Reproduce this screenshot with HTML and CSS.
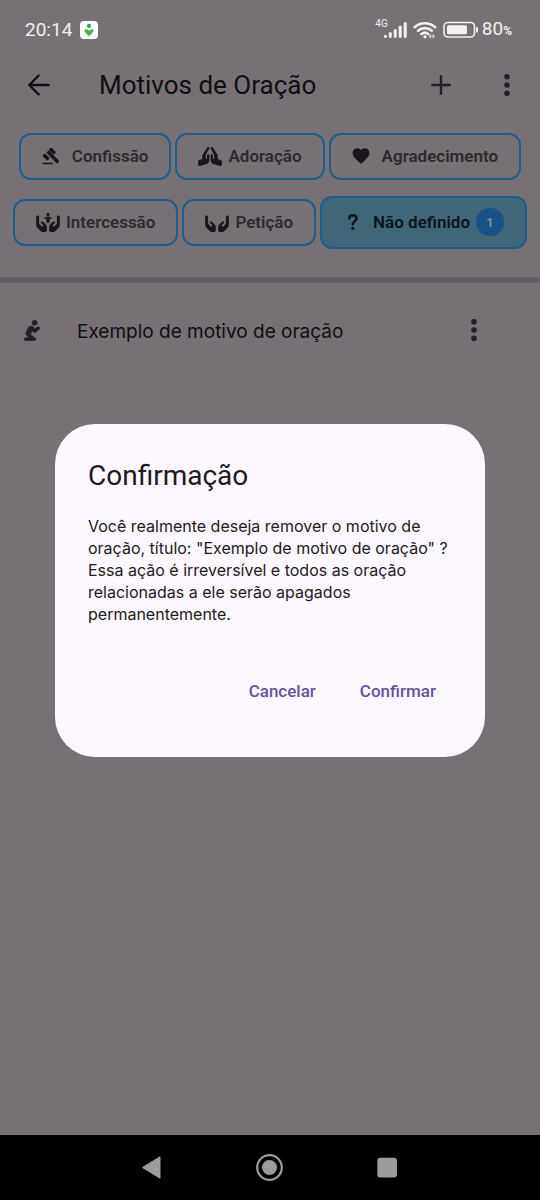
FILE: index.html
```html
<!DOCTYPE html>
<html lang="pt-BR">
<head>
<meta charset="utf-8">
<meta name="viewport" content="width=device-width, initial-scale=1">
<title>Motivos de Oração</title>
<link rel="stylesheet" href="styles.css">
</head>
<body>
<div class="screen">
  <div class="status-bar">
    <span class="clock">20:14</span>
    <svg class="app-badge" viewBox="0 0 18 18" aria-hidden="true">
      <rect width="18" height="18" rx="4" fill="#fff"/>
      <circle cx="9" cy="4.9" r="2.1" fill="#14b866"/>
      <path d="M9 15.2 6.3 12.4C4 10.9 4 8.4 6 8.3c1.3 0 2.3.6 3 1.5.7-.9 1.7-1.5 3-1.500 2 .1 2 2.6-.3 4.1z" fill="#4fb052"/>
    </svg>
    <div class="status-icons">
      <span class="network">4G</span>
      <svg class="signal" viewBox="0 0 26 18" aria-hidden="true">
        <g stroke="#f1eff1" stroke-width="3" stroke-linecap="round">
          <path d="M3.5 15.3v.2M8.3 12.500v3M13.2 9.500v6M18.2 6v9.500M23.2 2.500v13"/>
        </g>
      </svg>
      <svg class="wifi" viewBox="0 0 24 18" aria-hidden="true">
        <g fill="none" stroke="#f1eff1" stroke-width="2.6" stroke-linecap="round">
          <path d="M1.6 6.200c5.600-5.300 14.900-5.300 20.500 0M5 9.700c3.800-3.500 10-3.500 13.700 0M8.500 13c2-1.700 4.800-1.700 6.700 0"/>
        </g>
        <circle cx="12" cy="15.8" r="1.7" fill="#f1eff1"/>
        <path d="M18.2 12.500v5l-2.500-2zM19.500 17.500v-5l2.500 3z" fill="#dddadd"/>
      </svg>
      <svg class="battery" viewBox="0 0 36 18" aria-hidden="true">
        <rect x="1" y="1.5" width="30.5" height="14.5" rx="4" fill="none" stroke="#f1eff1" stroke-width="1.6"/>
        <rect x="4" y="4.300" width="20" height="9" rx="1.5" fill="#f1eff1"/>
        <path d="M34 7v3.600" stroke="#f1eff1" stroke-width="2" stroke-linecap="round"/>
      </svg>
      <span class="charge">80<small>%</small></span>
    </div>
  </div>

  <header class="app-bar">
    <button class="icon-button" type="button" aria-label="Voltar">
      <svg viewBox="0 0 24 24" width="24" height="24"><path d="M21.500 12H2.500M11.700 2.500 2.200 12l9.500 9.500" fill="none" stroke="#100e12" stroke-width="2.4" stroke-linecap="round" stroke-linejoin="round"/></svg>
    </button>
    <h1 class="app-title">Motivos de Oração</h1>
    <button class="icon-button" type="button" aria-label="Adicionar">
      <svg viewBox="0 0 24 24" width="24" height="24"><path d="M12 2.300v19.400M2.300 12h19.400" stroke="#231f26" stroke-width="2.4"/></svg>
    </button>
    <button class="icon-button" type="button" aria-label="Mais opções">
      <svg viewBox="0 0 24 24" width="24" height="24" fill="#231f26"><circle cx="12" cy="3.7" r="2.8"/><circle cx="12" cy="12" r="2.8"/><circle cx="12" cy="20.3" r="2.8"/></svg>
    </button>
  </header>

  <nav class="chips" aria-label="Categorias">
    <button class="chip" type="button">
      <span class="chip-icon"><svg viewBox="0 0 24 24" width="18" height="18" fill="#17161a" stroke="#17161a" stroke-linejoin="round"><path d="M1.500 22h12" stroke-width="2.2" stroke-linecap="round"/><path d="M7 7.500l2-2 13 13.500-2 2zM12.300 1.800l5.200 5.200-2 2-5.200-5.200zM3.800 9.800 9 15l-2 2-5.200-5.200z" stroke-width="1.8"/></svg></span>
      Confissão
    </button>
    <button class="chip" type="button">
      <span class="chip-icon"><svg viewBox="0 0 640 512" width="24" height="19" fill="#17161a"><path d="M351.200 4.800c3.200-2 6.600-3.300 10-4.100c4.700-1 9.600-.9 14.100 .1c7.700 1.800 14.800 6.500 19.400 13.600L514.600 194.200c8.800 13.100 13.400 28.600 13.400 44.400l0 73.500c0 6.900 4.400 13 10.900 15.200l79.200 26.400C631.200 358 640 370.200 640 384l0 96c0 9.900-4.600 19.300-12.500 25.400s-18.100 8.100-27.700 5.500L431 465.900c-56-14.900-95-65.700-95-123.700L336 224c0-17.700 14.300-32 32-32s32 14.300 32 32l0 80c0 8.800 7.200 16 16 16s16-7.200 16-16l0-84.900c0-7-1.800-13.800-5.300-19.800L340.300 48.100c-1.700-3-2.900-6.100-3.600-9.300c-1-4.700-1-9.600 .1-14.100c1.900-8 6.800-15.200 14.300-19.900zm-62.400 0c7.500 4.600 12.400 11.900 14.300 19.900c1.100 4.600 1.200 9.400 .1 14.100c-.7 3.200-1.900 6.300-3.600 9.300L213.300 199.300c-3.500 6-5.300 12.900-5.300 19.800l0 84.900c0 8.800 7.200 16 16 16s16-7.200 16-16l0-80c0-17.700 14.300-32 32-32s32 14.300 32 32l0 118.200c0 58-39 108.700-95 123.700l-168.700 45c-9.600 2.600-19.900 .5-27.700-5.500S0 490 0 480l0-96c0-13.800 8.800-26 21.900-30.400l79.200-26.400c6.500-2.200 10.900-8.300 10.900-15.200l0-73.500c0-15.800 4.700-31.200 13.400-44.400L245.200 14.500c4.600-7.100 11.700-11.800 19.400-13.600c4.600-1.100 9.400-1.200 14.100-.1c3.500 .8 6.900 2.100 10 4.100z"/></svg></span>
      Adoração
    </button>
    <button class="chip" type="button">
      <span class="chip-icon"><svg viewBox="0 0 24 24" width="18" height="18" fill="#17161a"><path d="M12 22.500 10.400 21C4.600 15.700.8 12.200.8 7.900.8 4.400 3.600 1.700 7 1.700c2 0 3.800.9 5 2.300 1.200-1.400 3-2.300 5-2.300 3.400 0 6.200 2.700 6.200 6.200 0 4.300-3.800 7.800-9.600 13.100z"/></svg></span>
      Agradecimento
    </button>
    <button class="chip" type="button">
      <span class="chip-icon"><svg viewBox="0 0 640 512" width="24" height="19" fill="#17161a"><path d="M80 104c0-22.100-17.900-40-40-40S0 81.900 0 104l0 221.500c0 25.500 10.100 49.900 28.100 67.900L128 493.300c12 12 28.300 18.700 45.300 18.700l66.700 0c26.500 0 48-21.500 48-48l0-78.900c0-29.700-11.800-58.200-32.800-79.200l-72.500-72.500c-12.500-12.500-32.800-12.500-45.300 0s-12.500 32.800 0 45.300l47.200 47.200c11 11 9.200 29.200-3.700 37.800c-9.700 6.500-22.700 5.200-31-3.100L98.700 309.500c-12-12-18.700-28.300-18.700-45.300zM560 104l0 160.200c0 17-6.700 33.300-18.700 45.300l-51.100 51.100c-8.300 8.300-21.300 9.600-31 3.100c-12.900-8.600-14.700-26.900-3.700-37.800l47.200-47.200c12.500-12.500 12.500-32.800 0-45.300s-32.800-12.500-45.300 0l-72.500 72.500c-21 21-32.800 49.500-32.800 79.200l0 78.900c0 26.500 21.500 48 48 48l66.700 0c17 0 33.300-6.700 45.300-18.700l99.900-99.900c18-18 28.100-42.400 28.100-67.900L640 104c0-22.100-17.900-40-40-40s-40 17.900-40 40z"/><circle cx="320" cy="40" r="42"/><path d="M236 138l52-20h64l52 20M320 130v72M298 140v108M342 140v108" fill="none" stroke="#17161a" stroke-width="42" stroke-linecap="round" stroke-linejoin="round"/></svg></span>
      Intercessão
    </button>
    <button class="chip" type="button">
      <span class="chip-icon"><svg viewBox="0 0 640 512" width="24" height="19" fill="#17161a"><path d="M80 104c0-22.100-17.900-40-40-40S0 81.900 0 104l0 221.500c0 25.500 10.100 49.900 28.100 67.900L128 493.300c12 12 28.300 18.700 45.300 18.700l66.700 0c26.500 0 48-21.500 48-48l0-78.900c0-29.700-11.800-58.200-32.800-79.200l-72.500-72.500c-12.500-12.500-32.800-12.500-45.300 0s-12.500 32.800 0 45.300l47.200 47.200c11 11 9.200 29.200-3.700 37.800c-9.700 6.500-22.700 5.200-31-3.100L98.700 309.500c-12-12-18.700-28.300-18.700-45.300zM560 104l0 160.200c0 17-6.700 33.300-18.700 45.300l-51.100 51.100c-8.300 8.300-21.300 9.600-31 3.100c-12.900-8.600-14.700-26.900-3.700-37.800l47.200-47.200c12.500-12.500 12.500-32.800 0-45.300s-32.800-12.500-45.300 0l-72.500 72.500c-21 21-32.800 49.500-32.800 79.200l0 78.900c0 26.500 21.500 48 48 48l66.700 0c17 0 33.300-6.700 45.300-18.700l99.900-99.900c18-18 28.100-42.400 28.100-67.900L640 104c0-22.100-17.900-40-40-40s-40 17.900-40 40z"/></svg></span>
      Petição
    </button>
    <button class="chip chip-selected" type="button" aria-pressed="true">
      <span class="chip-icon"><svg viewBox="0 0 18 18" width="18" height="18"><path d="M6.300 5.500C6.300 3.300 7.800 2.200 9.800 2.200s3.700 1.200 3.700 3.200C13.500 8 9.800 8.300 9.800 11.300" fill="none" stroke="#0d1419" stroke-width="2.5" stroke-linecap="round"/><circle cx="9.8" cy="15.3" r="1.6" fill="#0d1419"/></svg></span>
      Não definido
      <span class="count">1</span>
    </button>
  </nav>

  <main class="list">
    <article class="item">
      <svg class="item-icon" viewBox="0 0 448 512" aria-hidden="true"><path d="M354 64a64 64 0 1 0-128 0a64 64 0 1 0 128 0zM232.700 264l22.900 31.500c6.500 8.900 16.300 14.700 27.200 16.100s21.900-1.700 30.400-8.700l88-72c17.100-14 19.600-39.200 5.600-56.300s-39.200-19.600-56.300-5.600l-55.200 45.200-26.200-36C253.600 156.700 228.600 144 202 144c-30.900 0-59.200 17.100-73.600 44.400L79.800 280.900c-20.200 38.500-9.400 85.900 25.600 111.800L158.600 432 72 432c-22.100 0-40 17.900-40 40s17.900 40 40 40l208 0c17.300 0 32.600-11.100 38-27.500s-.3-34.400-14.200-44.600L187.700 354z" fill="#231f26" stroke="#231f26" stroke-width="10"/></svg>
      <span class="item-title">Exemplo de motivo de oração</span>
      <button class="icon-button" type="button" aria-label="Opções do motivo">
        <svg viewBox="0 0 24 24" width="24" height="24" fill="#231f26"><circle cx="12" cy="3.7" r="2.8"/><circle cx="12" cy="12" r="2.8"/><circle cx="12" cy="20.3" r="2.8"/></svg>
      </button>
    </article>
  </main>

  <div class="overlay">
    <section class="dialog" role="alertdialog" aria-modal="true" aria-labelledby="dialog-title" aria-describedby="dialog-text">
      <h2 class="dialog-title" id="dialog-title">Confirmação</h2>
      <p class="dialog-text" id="dialog-text">Você realmente deseja remover o motivo de oração, título: "Exemplo de motivo de oração" ? Essa ação é irreversível e todos as oração relacionadas a ele serão apagados permanentemente.</p>
      <div class="dialog-actions">
        <button class="text-button" type="button">Cancelar</button>
        <button class="text-button" type="button">Confirmar</button>
      </div>
    </section>
  </div>
</div>

<footer class="system-nav">
  <button class="nav-button" type="button" aria-label="Voltar"><svg viewBox="0 0 28 28" width="28" height="28"><path d="M4.500 13.500 22 2.800v21.400z" fill="#9c9c9c" stroke="#9c9c9c" stroke-linejoin="round"/></svg></button>
  <button class="nav-button" type="button" aria-label="Início"><svg viewBox="0 0 28 28" width="28" height="28"><circle cx="13.5" cy="13.5" r="12.3" fill="none" stroke="#9c9c9c" stroke-width="2.2"/><circle cx="13.5" cy="13.5" r="7.5" fill="#9c9c9c"/></svg></button>
  <button class="nav-button" type="button" aria-label="Recentes"><svg viewBox="0 0 28 28" width="28" height="28"><rect x="3.3" y="3.7" width="19.700" height="19.700" rx="3" fill="#9c9c9c"/></svg></button>
</footer>
</body>
</html>
```
FILE: styles.css
```css
* {
  box-sizing: border-box;
}

body {
  margin: 0;
  min-height: 100vh;
  display: flex;
  flex-direction: column;
  background: #777175;
  color: #100e12;
  font-family: Roboto, "Noto Sans", sans-serif;
}

button {
  padding: 0;
  border: 0;
  background: none;
  color: inherit;
  font: inherit;
}

svg {
  display: block;
  flex: none;
}

.screen {
  position: relative;
  flex: 1;
}

/* Status bar */
.status-bar {
  display: flex;
  align-items: center;
  gap: 8px;
  height: 60px;
  padding: 0 28px 0 25px;
  color: #f1eff1;
}

.clock,
.charge {
  font-size: 19px;
  line-height: 24px;
}

.app-badge {
  width: 18px;
  height: 18px;
}

.status-icons {
  display: flex;
  align-items: center;
  margin-left: auto;
}

.network {
  align-self: flex-start;
  font-size: 10px;
  line-height: 14px;
  margin-right: -6px;
}

.signal {
  width: 26px;
  height: 18px;
}

.wifi {
  width: 24px;
  height: 18px;
  margin: 0 6px 0 5px;
}

.battery {
  width: 36px;
  height: 18px;
  margin-right: 3px;
}

.charge small {
  font-size: 12px;
  font-weight: 700;
}

/* App bar */
.app-bar {
  display: flex;
  align-items: center;
  height: 50px;
  padding: 0 12px 0 18px;
}

.icon-button {
  display: grid;
  place-items: center;
  width: 42px;
  height: 42px;
}

.app-title {
  flex: 1;
  margin: 0;
  padding-left: 39px;
  font-size: 26px;
  font-weight: 400;
  line-height: 32px;
}

.app-bar .icon-button + .icon-button {
  margin-left: 24px;
}

/* Category chips */
.chips {
  display: flex;
  flex-wrap: wrap;
  align-items: center;
  justify-content: center;
  gap: 16px 4px;
  padding: 23px 12px 28px;
  border-bottom: 6px solid #655f65;
}

.chip {
  display: flex;
  align-items: center;
  height: 47px;
  padding: 0 21px 1px;
  border: 2px solid #1e5d8b;
  border-radius: 12px;
  color: #2d292f;
  font-size: 17px;
  font-weight: 600;
  white-space: nowrap;
}

.chip-icon {
  width: 30px;
}

.chip-selected {
  height: 53px;
  background: #3f6778;
  color: #0d1419;
}

.count {
  display: grid;
  place-items: center;
  width: 28px;
  height: 28px;
  margin-left: 6px;
  border-radius: 50%;
  background: #175289;
  color: #8a8d96;
  font-size: 13px;
}

/* List */
.item {
  display: flex;
  align-items: center;
  height: 94px;
  padding: 0 45px 0 23px;
}

.item-icon {
  width: 18px;
  height: 21px;
}

.item-title {
  flex: 1;
  padding: 3px 0 0 36px;
  font-family: Inter, sans-serif;
  font-size: 19px;
  line-height: 26px;
}

/* Confirmation dialog */
.overlay {
  position: absolute;
  inset: 0;
  display: flex;
  align-items: center;
  justify-content: center;
  padding: 46px 55px 0;
}

.dialog {
  width: 100%;
  padding: 34px 33px 43px;
  border-radius: 40px;
  background: #fdf7ff;
  color: #1d1a20;
}

.dialog-title {
  margin: 0 0 21px;
  font-size: 28px;
  font-weight: 400;
  line-height: 36px;
}

.dialog-text {
  margin: 0 0 43px;
  font-family: Inter, sans-serif;
  font-size: 16px;
  line-height: 22px;
}

.dialog-actions {
  display: flex;
  justify-content: flex-end;
  gap: 12px;
}

.text-button {
  height: 46px;
  padding: 0 16px;
  color: #6650a4;
  font-size: 17px;
  font-weight: 500;
}

/* System navigation */
.system-nav {
  display: flex;
  align-items: center;
  justify-content: center;
  gap: 90px;
  height: 65px;
  background: #000;
}
```
